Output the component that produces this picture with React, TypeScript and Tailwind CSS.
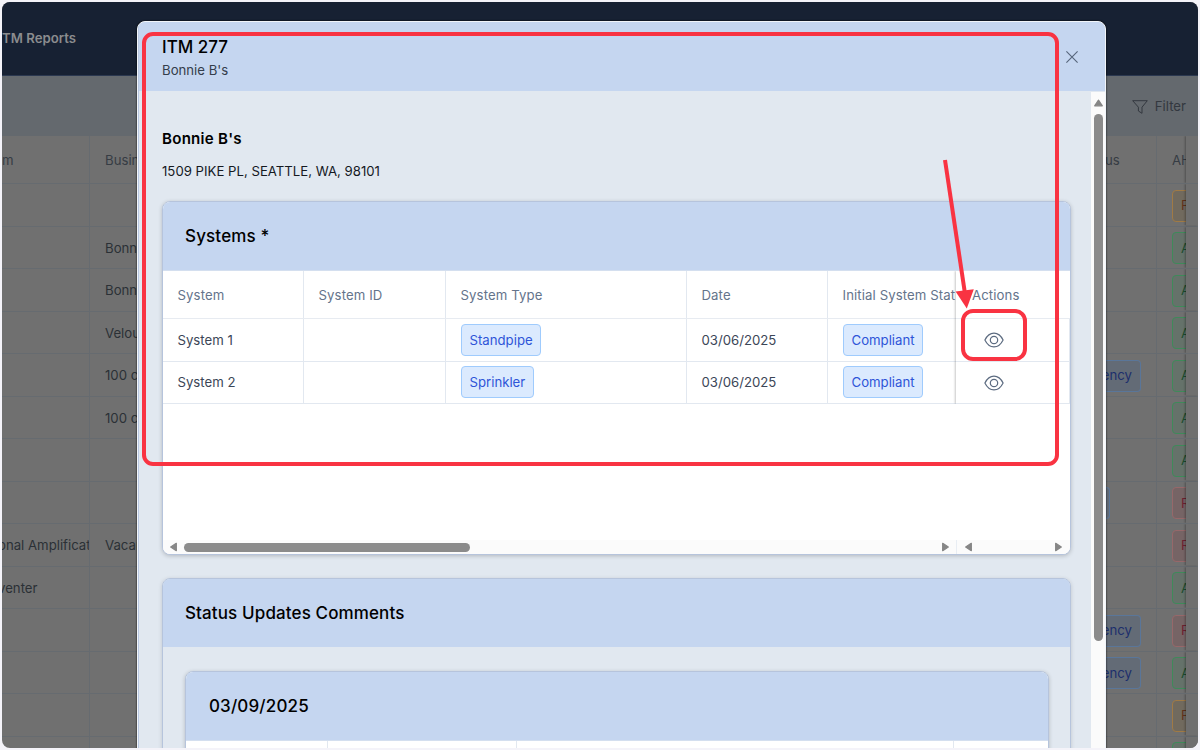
import React from 'react'

const reportRows = [
  { ahj: 'P' },
  { business: 'Bonni', ahj: 'A' },
  { business: 'Bonni', ahj: 'A' },
  { business: 'Velou', ahj: 'A' },
  { business: '100 c', status: 'ency', ahj: 'A' },
  { business: '100 c', ahj: 'A' },
  { ahj: 'A' },
  { status: '', ahj: 'R' },
  { system: 'onal Amplificat', business: 'Vacar', ahj: 'R' },
  { system: 'venter', ahj: 'A' },
  { status: 'ency', ahj: 'R' },
  { status: 'ency', ahj: 'A' },
  { ahj: 'P' },
  { ahj: 'A' },
] as { system?: string; business?: string; status?: string; ahj: string }[]

const ahjColors: Record<string, string> = {
  P: 'border-[#a07a45] bg-[#716a5e] text-[#5f3019]',
  A: 'border-[#3f8a5a] bg-[#65726a] text-[#1c4c2e]',
  R: 'border-[#96686a] bg-[#766465] text-[#6d2030]',
}

const systems = [
  { name: 'System 1', type: 'Standpipe', date: '03/06/2025', status: 'Compliant' },
  { name: 'System 2', type: 'Sprinkler', date: '03/06/2025', status: 'Compliant' },
]

function EyeIcon() {
  return (
    <svg width="20" height="16" viewBox="0 0 20 16" fill="none" stroke="#5c6b80" strokeWidth="1.2">
      <path
        d="M.900 8C3 3.700 6.200 1.100 10 1.100S17 3.700 19.100 8C17 12.300 13.800 14.900 10 14.900S3 12.300.900 8z"
        strokeLinejoin="round"
      />
      <circle cx="10" cy="8" r="3.7" />
    </svg>
  )
}

function Arrow({ dir }: { dir: 'up' | 'left' | 'right' }) {
  const rotate = { up: '', left: '-rotate-90', right: 'rotate-90' }[dir]
  return (
    <svg width="9" height="8" viewBox="0 0 9 8" className={`shrink-0 ${rotate}`}>
      <path d="M4.500 1.200 8.300 6.800H.700z" fill="#868686" stroke="#868686" strokeWidth="1.3" strokeLinejoin="round" />
    </svg>
  )
}

function Tag({ children }: { children: React.ReactNode }) {
  return (
    <span className="flex h-8 items-center rounded-[4px] border border-[#9fcbfd] bg-[#dbeafe] px-[7.5px] pt-0.5 text-[#2e55d8]">
      {children}
    </span>
  )
}

function ReportsPage() {
  return (
    <div className="flex h-full flex-col bg-[#707070] text-[#2b3036]">
      <div className="h-[74px] shrink-0 border-b border-[#2b3850] bg-[#172133] pt-[26px] text-[13.2px] leading-5 font-semibold text-[#8b8c8e]">
        TM Reports
      </div>
      <div className="flex h-[60px] shrink-0 items-center justify-end gap-[7px] bg-[#64696e] pt-0.5 pr-3 text-[#33383f]">
        <svg width="16" height="14" viewBox="0 0 16 14" fill="none" stroke="currentColor" strokeLinejoin="round">
          <path d="M.7.700h14.600L10 7.200v6.100L6.400 11V7.200z" />
        </svg>
        <span>Filter</span>
      </div>
      <div className="flex h-12 shrink-0 border-b border-[#666b70] text-[#363c44]">
        <div className="flex w-[88px] items-center border-r border-[#666b70] pt-[3px]">m</div>
        <div className="flex w-[1014px] items-center pt-[3px] pl-[15px]">Busin</div>
        <div className="flex w-[53px] items-center border-r border-[#666b70] pt-[3px] pl-px">us</div>
        <div className="flex w-[29px] items-center overflow-hidden pt-[3px] pl-[15px]">AHJ</div>
        <div className="z-10 flex-1 bg-[#6f6f6f] shadow-[-1px_0_2px_rgba(0,0,0,0.3)] [clip-path:inset(0_0_0_-4px)]" />
      </div>
      {reportRows.map((row, i) => (
        <div key={i} className="flex h-[42.5px] shrink-0 border-b border-[#666b70]">
          <div className="flex w-[88px] items-center overflow-hidden border-r border-[#666b70] pt-[3px] whitespace-nowrap">
            <span className="-ml-1">{row.system}</span>
          </div>
          <div className="flex w-[1014px] items-center pt-[3px] pl-[15px]">{row.business}</div>
          <div className="flex w-[53px] items-center border-r border-[#666b70] pt-0.5">
            {row.status !== undefined && (
              <span
                className={`flex h-8 items-center justify-end rounded-r-[4px] border border-l-0 border-[#5a7699] bg-[#636b76] text-[#1d2f6c] ${
                  row.status ? 'w-[37px] pt-px pr-2' : 'w-[6px]'
                }`}
              >
                {row.status}
              </span>
            )}
          </div>
          <div className="flex w-[29px] items-center overflow-hidden pt-0.5 pl-[15px]">
            <span className={`flex h-8 w-10 shrink-0 items-center rounded-[4px] border pt-px pl-2 ${ahjColors[row.ahj]}`}>{row.ahj}</span>
          </div>
          <div className="z-10 flex-1 bg-[#6f6f6f] shadow-[-1px_0_2px_rgba(0,0,0,0.3)] [clip-path:inset(0_0_0_-4px)]" />
        </div>
      ))}
    </div>
  )
}

function SystemsTable() {
  return (
    <div className="flex h-[269px] bg-white text-[#3b4657]">
      <div className="w-[793px] overflow-hidden whitespace-nowrap">
        <div className="grid h-12 grid-cols-[141px_142px_241px_141px_128px] border-b border-[#e7ebf1] tracking-[0.1px] text-[#64748b]">
          {['System', 'System ID', 'System Type', 'Date', 'Initial System Stat'].map((label) => (
            <div key={label} className="flex items-center border-r border-[#e2e8f0] pt-0.5 pl-[14.5px] last:border-r-0">
              {label}
            </div>
          ))}
        </div>
        {systems.map((s) => (
          <div key={s.name} className="grid h-[42.5px] grid-cols-[141px_142px_241px_141px_128px] border-b border-[#e2e8f0]">
            <div className="flex items-center border-r border-[#e2e8f0] pt-0.5 pl-[14.5px]">{s.name}</div>
            <div className="border-r border-[#e2e8f0]" />
            <div className="flex items-center border-r border-[#e2e8f0] pl-[15px]">
              <Tag>{s.type}</Tag>
            </div>
            <div className="flex items-center border-r border-[#e2e8f0] pt-0.5 pl-[14.5px]">{s.date}</div>
            <div className="flex items-center pl-[15px]">
              <Tag>{s.status}</Tag>
            </div>
          </div>
        ))}
      </div>
      {/* pinned actions column */}
      <div className="flex-1">
        <div className="h-[133px] shadow-[-1px_0_2px_rgba(0,0,0,0.22)] [clip-path:inset(0_0_0_-4px)]">
          <div className="flex h-12 items-center border-b border-[#e7ebf1] pt-0.5 pl-4 tracking-[0.1px] text-[#64748b]">Actions</div>
          {systems.map((s) => (
            <div key={s.name} className="flex h-[42.5px] items-center border-r border-b border-[#e2e8f0] pt-px pl-[27.5px]">
              <EyeIcon />
            </div>
          ))}
        </div>
      </div>
    </div>
  )
}

function ItmDialog() {
  return (
    <div className="flex h-[740px] w-[969px] flex-col overflow-hidden rounded-t-lg border border-[#f1f5fa] bg-[#e1e8f0] shadow-[0_0_2px_#000]">
      <div className="flex h-[69px] shrink-0 items-start justify-between border-l border-[#b9c8e2] bg-[#c5d6f0] pt-[13px] pr-[27px] pl-[23px]">
        <div>
          <div className="text-[17px] leading-6 font-medium text-black">ITM 277</div>
          <div className="mt-px text-[13.2px] leading-5 text-[#343d4b]">Bonnie B's</div>
        </div>
        <svg width="12" height="12" viewBox="0 0 12 12" className="mt-4" stroke="#56657a" strokeWidth="1.1">
          <path d="M.400.400l11.200 11.200M11.600.400.400 11.600" />
        </svg>
      </div>
      <div className="flex min-h-0 flex-1">
        <div className="flex-1 border-l border-[#b9c8e2] pl-[23px]">
          <div className="mt-9 text-[15.1px] leading-6 font-semibold tracking-[0.25px] text-black">Bonnie B's</div>
          <div className="mt-[10px] leading-5 text-[#15191f]">1509 PIKE PL, SEATTLE, WA, 98101</div>
          <div className="mt-5 w-[909px] overflow-clip rounded-lg border border-[#b6c4dc] bg-white shadow-[0_1px_4px_rgba(0,0,0,0.2)]">
            <div className="flex h-[69px] items-center border-b border-[#d4dfef] bg-[#c5d6f0] pt-0.5 pl-[22px] text-[17px] font-medium tracking-[0.15px] text-black">
              Systems *
            </div>
            <SystemsTable />
            <div className="flex h-[14px] items-center bg-[#fbfbfb]">
              <div className="flex h-full w-[794px] items-center border-r border-[#e8edf3] px-1.5">
                <Arrow dir="left" />
                <div className="ml-1.5 h-[9px] w-[286px] rounded-full bg-[#8b8b8b]" />
                <div className="flex-1" />
                <Arrow dir="right" />
              </div>
              <div className="flex flex-1 justify-between px-[7px]">
                <Arrow dir="left" />
                <Arrow dir="right" />
              </div>
            </div>
          </div>
          <div className="mt-[23px] h-[220px] w-[909px] rounded-lg border border-[#b6c4dc] shadow-[0_1px_4px_rgba(0,0,0,0.15)]">
            <div className="flex h-[68px] items-center rounded-t-[7px] bg-[#c5d6f0] pt-0.5 pl-[22px] text-[17px] font-medium tracking-[0.12px] text-black">
              Status Updates Comments
            </div>
            <div className="mt-6 ml-[22px] w-[864px] overflow-clip rounded-lg border border-[#b6c4dc] bg-white shadow-[0_1px_4px_rgba(0,0,0,0.2)]">
              <div className="flex h-[68.5px] items-center border-b border-[#d4dfef] bg-[#c5d6f0] pt-px pl-[23px] text-[17px] font-medium tracking-[0.15px] text-black">
                03/09/2025
              </div>
              <div className="grid h-12 grid-cols-[142px_189px_437px_1fr]">
                <div className="border-r border-[#e2e8f0]" />
                <div className="border-r border-[#e2e8f0]" />
                <div className="border-r border-[#e2e8f0]" />
              </div>
            </div>
          </div>
        </div>
        <div className="mt-px flex w-[14px] flex-col items-center bg-[#fbfbfb] pt-[7px]">
          <Arrow dir="up" />
          <div className="mt-[7px] h-[527px] w-[9px] rounded-full bg-[#8b8b8b]" />
        </div>
      </div>
    </div>
  )
}

export default function App() {
  return (
    <div className="h-[750px] w-[1200px] overflow-hidden bg-[#f4f3f9] p-0.5 font-['Inter',sans-serif] text-[13.2px]">
      <div className="relative h-[746px] overflow-hidden rounded-lg">
        <ReportsPage />
        <div className="absolute top-[19px] left-[135px] z-20">
          <ItmDialog />
        </div>
        {/* callouts drawn over the dialog */}
        <div className="absolute top-[30px] left-[140px] z-30 h-[434px] w-[917px] rounded-[11px] border-4 border-[#f93342]" />
        <div className="absolute top-[307px] left-[959px] z-30 h-[52px] w-[66px] rounded-[12px] border-4 border-[#f93342]" />
        <svg className="absolute top-[157px] left-[938px] z-30" width="40" height="152" viewBox="940 159 40 152">
          <path d="M945 160l19.900 133" stroke="#f93342" strokeWidth="4" />
          <path d="M955.600 291.500l18.200-2.300-7 19.200z" fill="#f93342" />
        </svg>
      </div>
    </div>
  )
}
